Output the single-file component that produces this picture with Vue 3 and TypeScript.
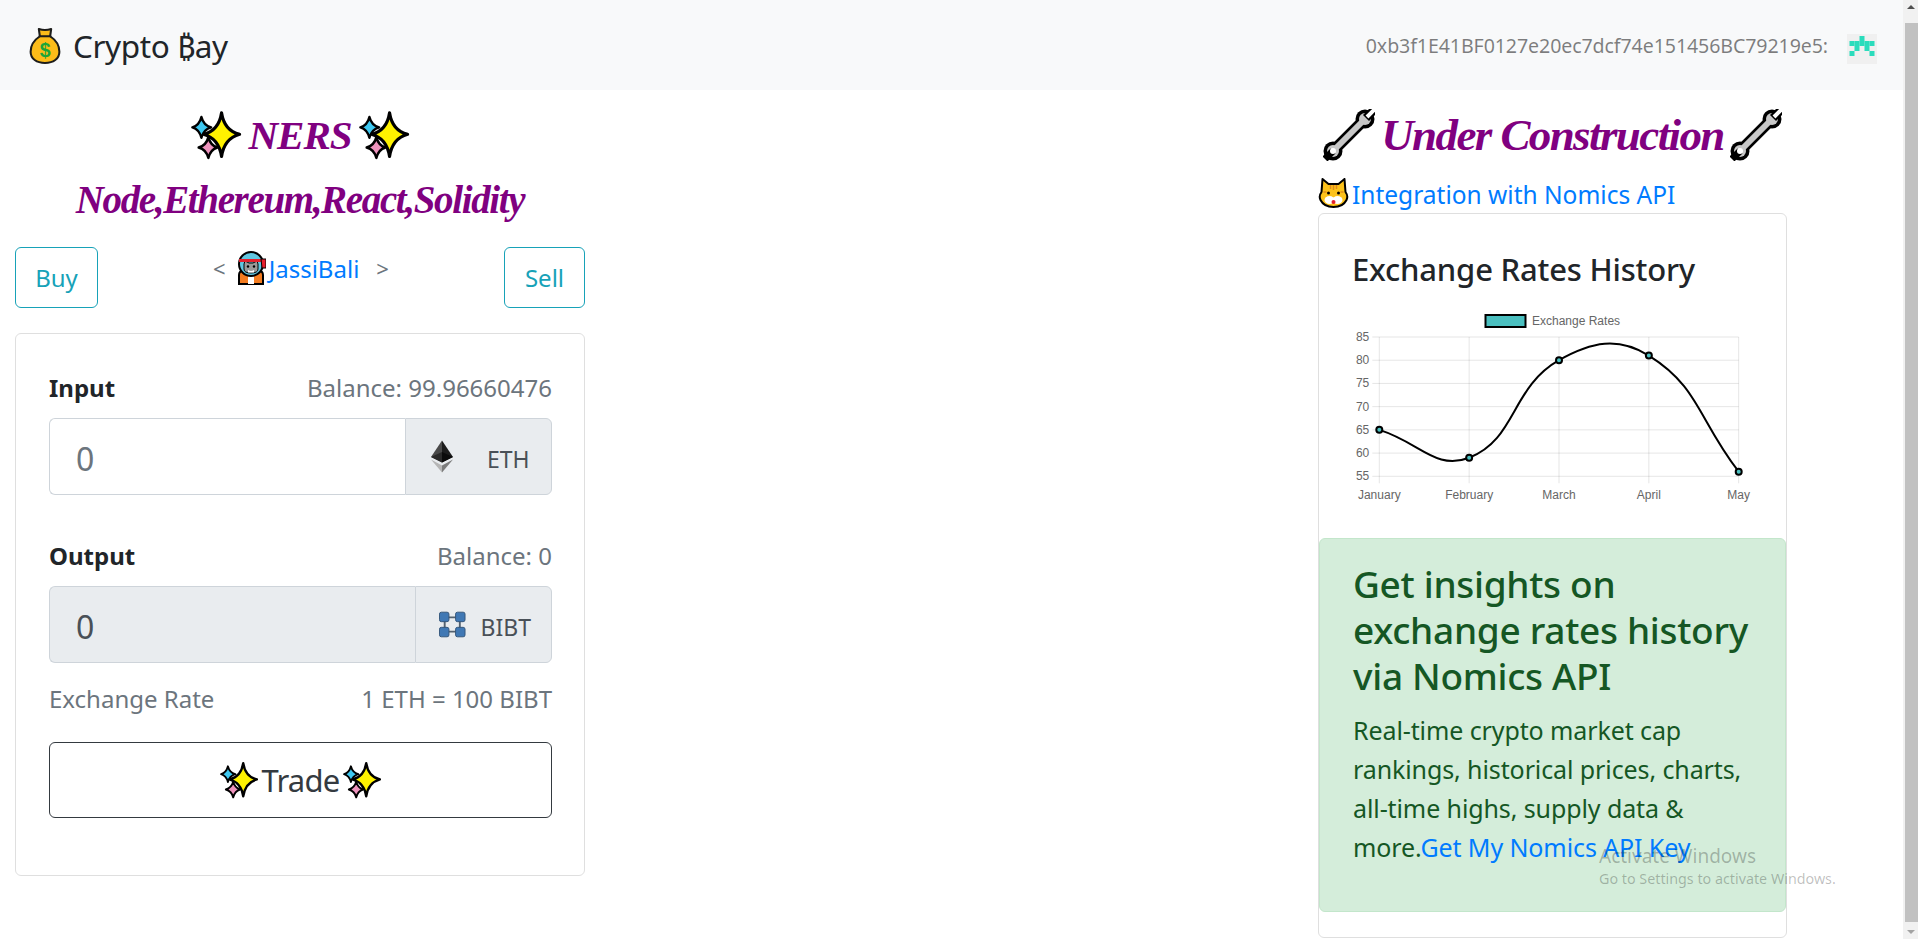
<script setup lang="ts">
import { computed } from 'vue';

const address = '0xb3f1E41BF0127e20ec7dcf74e151456BC79219e5:';

const labels = ['January', 'February', 'March', 'April', 'May'];
const values = [65, 59, 80, 81, 56];
const ticks = [85, 80, 75, 70, 65, 60, 55];

// chart area inside the svg
const plot = { left: 26.3, right: 385.7, top: 31, bottom: 170.3 };
const tension = 0.45;

const xAt = (i: number) => plot.left + ((plot.right - plot.left) / (labels.length - 1)) * i;
const yAt = (v: number) => plot.top + ((85 - v) / 30) * (plot.bottom - plot.top);

const points = computed(() => values.map((v, i) => ({ x: xAt(i), y: yAt(v) })));

// same bezier spline as chart.js
const linePath = computed(() => {
  const pts = points.value;
  const ctrl = pts.map((cur, i) => {
    const prev = pts[i - 1] ?? cur;
    const next = pts[i + 1] ?? cur;
    const d01 = Math.hypot(cur.x - prev.x, cur.y - prev.y);
    const d12 = Math.hypot(next.x - cur.x, next.y - cur.y);
    const fa = (tension * d01) / (d01 + d12);
    const fb = (tension * d12) / (d01 + d12);
    return {
      inX: cur.x - fa * (next.x - prev.x),
      inY: cur.y - fa * (next.y - prev.y),
      outX: cur.x + fb * (next.x - prev.x),
      outY: cur.y + fb * (next.y - prev.y),
    };
  });
  let d = `M${pts[0].x} ${pts[0].y}`;
  for (let i = 1; i < pts.length; i++) {
    d += ` C${ctrl[i - 1].outX} ${ctrl[i - 1].outY} ${ctrl[i].inX} ${ctrl[i].inY} ${pts[i].x} ${pts[i].y}`;
  }
  return d;
});

const identicon = [
  [2, 0], [0, 1], [1, 1], [2, 1], [3, 1], [4, 1], [1, 2], [3, 2], [0, 3], [4, 3],
];
</script>

<template>
  <svg class="defs" width="0" height="0" aria-hidden="true">
    <symbol id="sparkles" viewBox="0 0 72 72">
      <path d="M44 4Q48 30 70 35Q48 41 44 67Q40 41 18 35Q40 30 44 4Z" fill="#fff200" stroke="#000" stroke-width="4.500" stroke-linejoin="round" />
      <path d="M15 10Q18 22 29 25Q18 28 15 40Q12 28 2 25Q12 22 15 10Z" fill="#3fc8f0" stroke="#000" stroke-width="3.500" stroke-linejoin="round" />
      <path d="M25 39Q28 51 38 54Q28 57 25 69Q22 57 11 54Q22 51 25 39Z" fill="#ee93bd" stroke="#000" stroke-width="3.500" stroke-linejoin="round" />
    </symbol>
    <symbol id="wrench" viewBox="0 0 52 52">
      <path d="M11 41L41 11" stroke="#000" stroke-width="11" />
      <circle cx="10" cy="42" r="9.500" fill="#000" />
      <circle cx="42" cy="10" r="9.500" fill="#000" />
      <path d="M11 41L41 11" stroke="#c8c8c8" stroke-width="6" />
      <circle cx="10" cy="42" r="6" fill="#c8c8c8" />
      <circle cx="42" cy="10" r="6" fill="#c8c8c8" />
      <path d="M43 9L52 0" stroke="#000" stroke-width="8.500" />
      <path d="M44 8L52 0" stroke="#fff" stroke-width="4" />
      <path d="M10 42L2 50" stroke="#000" stroke-width="7" />
      <circle cx="10" cy="42" r="3" fill="#fff" />
    </symbol>
  </svg>

  <div class="page">
    <nav class="navbar">
      <a class="brand">
        <svg class="bag" viewBox="0 0 30 36">
          <path d="M9 2Q15 4 21 2L20 9Q29 15 29 24C29 31 23 35 15 35C7 35 1 31 1 24Q1 15 10 9Z" fill="#fcbc19" stroke="#1d1d1b" stroke-width="2" stroke-linejoin="round" />
          <path d="M9 9H21" stroke="#1d1d1b" stroke-width="2" />
          <text x="15" y="29" text-anchor="middle" class="bag-sign">$</text>
        </svg>
        <span>Crypto ₿ay</span>
      </a>
      <div class="account">
        <span class="address">{{ address }}</span>
        <svg class="identicon" viewBox="0 0 30 30">
          <rect width="30" height="30" fill="#f0f0f0" />
          <rect v-for="[c, r] in identicon" :key="`${c}-${r}`" :x="2.5 + c * 5" :y="2 + r * 5" width="5" height="5" fill="#2bdcbc" />
        </svg>
      </div>
    </nav>

    <main class="columns">
      <section class="left">
        <h2 class="fancy">
          <svg class="sparkles-lg"><use href="#sparkles" /></svg>
          <span>NERS</span>
          <svg class="sparkles-lg"><use href="#sparkles" /></svg>
        </h2>
        <h2 class="fancy stack">Node,Ethereum,React,Solidity</h2>

        <div class="switcher">
          <button class="btn-info">Buy</button>
          <div class="owner">
            <span class="chevron">&lt;</span>
            <svg class="mascot" viewBox="0 0 30 34">
              <path d="M3 33V24Q3 20 8 19H22Q27 20 27 24V33Z" fill="#f47c20" stroke="#000" stroke-width="2" />
              <path d="M12 24H18V33H12Z" fill="#fff" />
              <circle cx="15" cy="13" r="12" fill="#60c6e0" stroke="#000" stroke-width="2" />
              <path d="M8 13L9 10L13 12H17L21 10L22 13V18Q22 22 15 22Q8 22 8 18Z" fill="#9a9a9a" stroke="#000" stroke-width="1" />
              <path d="M3 8H27V11H3Z" fill="#e5202e" />
              <path d="M25 8L30 8V17H26Z" fill="#e5202e" stroke="#000" stroke-width="1" />
              <path d="M12 19Q15 21 18 19V21.500H12Z" fill="#fff" />
              <circle cx="12" cy="15.500" r="1.200" /><circle cx="18" cy="15.500" r="1.200" />
            </svg>
            <a class="link">JassiBali</a>
            <span class="chevron right-chevron">&gt;</span>
          </div>
          <button class="btn-info">Sell</button>
        </div>

        <div class="card swap">
          <div class="row-label">
            <b>Input</b>
            <span>Balance: 99.96660476</span>
          </div>
          <div class="input-group">
            <input class="amount" value="0" readonly />
            <div class="addon eth">
              <svg class="eth-icon" viewBox="0 0 22 32">
                <path d="M11 0L0 16.500L11 22Z" fill="#4a4a4a" />
                <path d="M11 0L22 16.500L11 22Z" fill="#1c1c1c" />
                <path d="M0 16.500L11 11.500V22Z" fill="#2a2a2a" />
                <path d="M22 16.500L11 11.500V22Z" fill="#0b0b0b" />
                <path d="M0 19L11 32V25Z" fill="#b5b5b5" />
                <path d="M22 19L11 32V25Z" fill="#7c7c7c" />
              </svg>
              <span>ETH</span>
            </div>
          </div>

          <div class="row-label output-label">
            <b>Output</b>
            <span>Balance: 0</span>
          </div>
          <div class="input-group">
            <input class="amount disabled" value="0" readonly />
            <div class="addon bibt">
              <svg class="bibt-icon" viewBox="0 0 28 27">
                <path d="M6 6H22V21H6Z" fill="none" stroke="#54626f" stroke-width="2" />
                <rect x="0.500" y="0.500" width="10" height="10" rx="2" fill="#4078b4" stroke="#33557a" />
                <rect x="17.500" y="0.500" width="10" height="10" rx="2" fill="#4078b4" stroke="#33557a" />
                <rect x="0.500" y="16.500" width="10" height="10" rx="2" fill="#4078b4" stroke="#33557a" />
                <rect x="17.500" y="16.500" width="10" height="10" rx="2" fill="#4078b4" stroke="#33557a" />
              </svg>
              <span>BIBT</span>
            </div>
          </div>

          <div class="row-label rate">
            <span>Exchange Rate</span>
            <span>1 ETH = 100 BIBT</span>
          </div>

          <button class="trade">
            <svg class="sparkles-md"><use href="#sparkles" /></svg>
            <span>Trade</span>
            <svg class="sparkles-md"><use href="#sparkles" /></svg>
          </button>
        </div>
      </section>

      <section class="right">
        <h2 class="fancy wide">
          <svg class="wrench"><use href="#wrench" /></svg>
          <span>Under Construction</span>
          <svg class="wrench"><use href="#wrench" /></svg>
        </h2>
        <div class="integration">
          <svg class="cat" viewBox="0 0 30 30">
            <path d="M4 1L10 6H20L26 1L27 14Q30 18 28 22C25 28 20 29 15 29C10 29 5 28 2 22Q0 18 3 14Z" fill="#fcc21b" stroke="#000" stroke-width="2" stroke-linejoin="round" />
            <path d="M12 7V11M18 7V11M15 7V12M5 14H8M22 14H25" stroke="#e08a1e" stroke-width="1.500" />
            <circle cx="10" cy="15" r="1.500" /><circle cx="20" cy="15" r="1.500" />
            <ellipse cx="11" cy="22" rx="5" ry="4" fill="#fff" /><ellipse cx="19" cy="22" rx="5" ry="4" fill="#fff" />
            <circle cx="15" cy="24" r="2" fill="#e5202e" />
          </svg>
          <a class="link">Integration with Nomics API</a>
        </div>

        <div class="card history">
          <div class="history-body">
            <h3>Exchange Rates History</h3>
            <svg class="chart" viewBox="0 0 400 200" width="400" height="200">
              <rect x="132.500" y="9" width="40" height="12" fill="#4bc0c0" stroke="#000" stroke-width="2" />
              <text x="179" y="19" class="tick">Exchange Rates</text>

              <line v-for="t in ticks" :key="t" :x1="plot.left - 7" :x2="plot.right" :y1="yAt(t)" :y2="yAt(t)" class="grid" />
              <line v-for="(l, i) in labels" :key="l" :x1="xAt(i)" :x2="xAt(i)" :y1="plot.top" :y2="plot.bottom + 7" class="grid" />

              <text v-for="t in ticks" :key="`y${t}`" :x="plot.left - 10" :y="yAt(t) + 4" text-anchor="end" class="tick">{{ t }}</text>
              <text v-for="(l, i) in labels" :key="`x${l}`" :x="xAt(i)" y="193" text-anchor="middle" class="tick">{{ l }}</text>

              <path :d="linePath" fill="none" stroke="#000" stroke-width="2" />
              <circle v-for="(p, i) in points" :key="i" :cx="p.x" :cy="p.y" r="3" fill="#4bc0c0" stroke="#000" stroke-width="2" />
            </svg>
          </div>
          <div class="alert">
            <h2>Get insights on exchange rates history via Nomics API</h2>
            <p>Real-time crypto market cap rankings, historical prices, charts, all-time highs, supply data &amp; more.<a class="link">Get My Nomics API Key</a></p>
          </div>
        </div>
      </section>
    </main>

    <div class="activate">
      <div class="activate-title">Activate Windows</div>
      <div>Go to Settings to activate Windows.</div>
    </div>

    <div class="scrollbar">
      <span class="arrow up"></span>
      <span class="thumb"></span>
      <span class="arrow down"></span>
    </div>
  </div>
</template>

<style>
html,
body {
  overflow: hidden;
  background: #fff;
}
</style>

<style scoped>
.defs {
  position: absolute;
}

.page {
  height: 939px;
  overflow: hidden;
  font-family: "Noto Sans", "Open Sans", "DejaVu Sans", sans-serif;
  font-size: 24px;
  color: #212529;
}

.navbar {
  width: 1903px;
  height: 90px;
  box-sizing: border-box;
  padding: 0 26px 0 29px;
  background: #f8f9fa;
  display: flex;
  justify-content: space-between;
  align-items: center;
}

.brand {
  display: flex;
  align-items: center;
  gap: 12px;
  font-size: 31.5px;
  letter-spacing: -0.4px;
}

.bag {
  width: 32px;
  height: 37px;
}

.bag-sign {
  font-size: 19px;
  font-weight: 700;
  fill: #1aa53a;
  font-family: "Liberation Sans", sans-serif;
}

.account {
  display: flex;
  align-items: center;
  gap: 19px;
}

.address {
  font-size: 19.6px;
  letter-spacing: -0.1px;
  color: rgba(0, 0, 0, 0.5);
}

.identicon {
  width: 30px;
  height: 30px;
  margin-top: 8px;
}

.columns {
  width: 1903px;
  box-sizing: border-box;
  padding: 13px 117px 0 15px;
  display: grid;
  grid-template-columns: 570px 1fr;
  column-gap: 733px;
}

.fancy {
  margin: 0;
  height: 64px;
  display: flex;
  align-items: center;
  justify-content: center;
  gap: 6px;
  font-family: "Liberation Serif", serif;
  font-style: italic;
  font-weight: 700;
  font-size: 41px;
  letter-spacing: -1px;
  color: #800080;
  white-space: nowrap;
}

.fancy.stack {
  font-size: 39px;
  letter-spacing: -1.35px;
}

.fancy.wide {
  font-size: 45px;
  letter-spacing: -1.6px;
}

.sparkles-lg {
  width: 52px;
  height: 50px;
}

.switcher {
  margin-top: 16px;
  display: flex;
  justify-content: space-between;
  align-items: flex-start;
}

.btn-info {
  height: 61px;
  padding: 0 12px;
  min-width: 81px;
  background: #fff;
  border: 1px solid #17a2b8;
  border-radius: 6px;
  color: #17a2b8;
  font: inherit;
  font-size: 24px;
}

.btn-info:first-child {
  min-width: 83px;
}

.owner {
  display: flex;
  align-items: center;
  height: 42px;
}

.chevron {
  color: #6c757d;
  font-size: 22px;
}

.mascot {
  width: 30px;
  height: 34px;
  margin: 0 3px 0 10px;
}

.right-chevron {
  margin-left: 17px;
}

.link {
  color: #007bff;
  text-decoration: none;
  cursor: pointer;
}

.card {
  box-sizing: border-box;
  background: #fff;
  border: 1px solid #dfdfdf;
  border-radius: 6px;
}

.swap {
  margin-top: 25px;
  height: 543px;
  padding: 35px 32px 0 33px;
}

.row-label {
  height: 36px;
  display: flex;
  justify-content: space-between;
  align-items: center;
  color: #6c757d;
}

.row-label b {
  color: #212529;
  font-weight: 700;
}

.output-label {
  margin-top: 42px;
}

.rate {
  margin-top: 17px;
}

.input-group {
  margin-top: 13px;
  height: 77px;
  display: flex;
}

.amount {
  flex: 1;
  min-width: 0;
  box-sizing: border-box;
  padding: 4px 26px 0;
  background: #fff;
  border: 1px solid #ced4da;
  border-right: 0;
  border-radius: 6px 0 0 6px;
  outline: none;
  color: #6c757d;
  font: inherit;
  font-size: 32px;
}

.amount.disabled {
  background: #e9ecef;
  color: #495057;
}

.addon {
  box-sizing: border-box;
  display: flex;
  align-items: center;
  background: #e9ecef;
  border: 1px solid #ced4da;
  border-radius: 0 6px 6px 0;
  color: #495057;
  padding-right: 20px;
  font-size: 23px;
}

.addon span {
  padding-top: 4px;
}

.eth {
  width: 147px;
  padding-left: 25px;
  gap: 34px;
}

.bibt {
  width: 137px;
  padding-left: 23px;
  gap: 15px;
}

.eth-icon {
  width: 22px;
  height: 33px;
}

.bibt-icon {
  width: 28px;
  height: 27px;
}

.trade {
  margin-top: 26px;
  width: 100%;
  height: 76px;
  display: flex;
  align-items: center;
  justify-content: center;
  gap: 4px;
  background: #fff;
  border: 1px solid #343a40;
  border-radius: 6px;
  color: #343a40;
  font: inherit;
  font-size: 31px;
  letter-spacing: -0.8px;
}

.sparkles-md {
  width: 38px;
  height: 38px;
}

.wrench {
  width: 52px;
  height: 52px;
}

.integration {
  height: 42px;
  margin-top: 6px;
  display: flex;
  align-items: center;
  gap: 3px;
  font-size: 24.5px;
}

.cat {
  width: 31px;
  height: 30px;
  margin-top: -2px;
}

.history {
  margin-top: -2px;
  height: 725px;
}

.history-body {
  padding: 33px 33px 0;
}

.history-body h3 {
  margin: 0;
  height: 44px;
  line-height: 44px;
  font-size: 31px;
  font-weight: 500;
  letter-spacing: -0.2px;
}

.chart {
  display: block;
  margin: 15px 0 32px 1px;
}

.tick {
  font-family: "Liberation Sans", Arial, sans-serif;
  font-size: 12px;
  fill: #666;
}

.grid {
  stroke: rgba(0, 0, 0, 0.1);
  stroke-width: 1;
}

.alert {
  box-sizing: border-box;
  height: 374px;
  padding: 22px 33px 0;
  background: #d4edda;
  border: 1px solid #c3e6cb;
  border-radius: 6px;
  color: #155724;
}

.alert h2 {
  margin: 0;
  font-size: 37px;
  line-height: 46px;
  font-weight: 500;
  letter-spacing: -0.3px;
}

.alert p {
  margin: 12px 0 0;
  font-size: 25px;
  line-height: 39px;
  letter-spacing: -0.1px;
}

.activate {
  position: absolute;
  left: 1599px;
  top: 844px;
  color: rgba(0, 0, 0, 0.26);
  font-size: 14.3px;
  line-height: 21px;
  white-space: nowrap;
}

.activate-title {
  font-size: 19px;
  line-height: 24px;
}

.scrollbar {
  position: fixed;
  top: 0;
  right: 0;
  width: 15px;
  height: 939px;
  background: #f1f1f1;
}

.thumb {
  position: absolute;
  left: 2px;
  right: 0;
  top: 23px;
  height: 899px;
  background: #c1c1c1;
}

.arrow {
  position: absolute;
  left: 4px;
  width: 0;
  height: 0;
  border-left: 4px solid transparent;
  border-right: 4px solid transparent;
}

.up {
  top: 5px;
  border-bottom: 4px solid #505050;
}

.down {
  bottom: 5px;
  border-top: 4px solid #a3a3a3;
}
</style>
